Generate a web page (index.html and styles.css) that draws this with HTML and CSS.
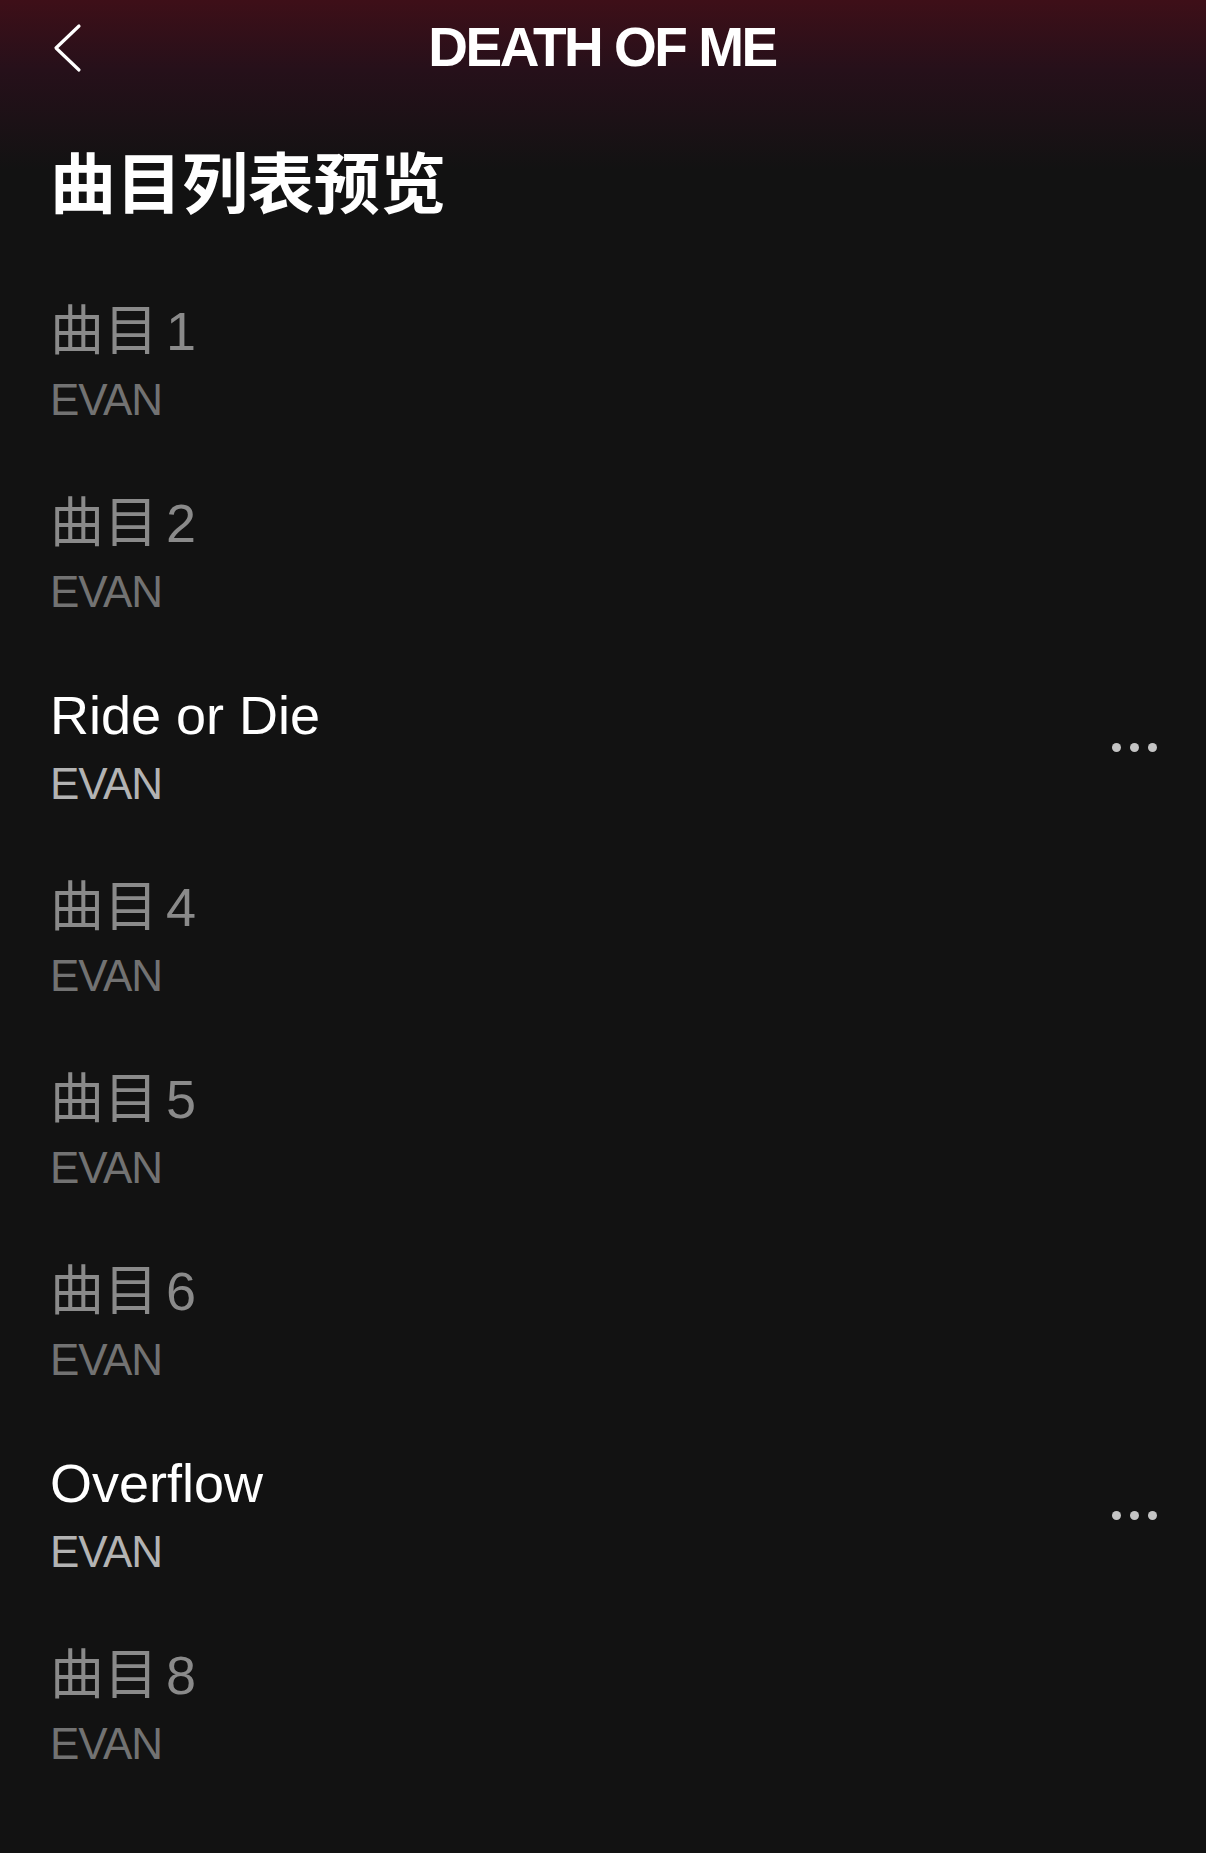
FILE: index.html
```html
<!DOCTYPE html>
<html lang="zh">
<head>
<meta charset="utf-8">
<title>DEATH OF ME</title>
<link rel="stylesheet" href="styles.css">
</head>
<body>
<div class="page">
  <header class="nav">
    <button class="back" aria-label="返回">
      <svg width="32" height="50" viewBox="0 0 32 50"><polyline points="27,3 4,25 27,47" fill="none" stroke="#ffffff" stroke-width="3.2" stroke-linecap="round" stroke-linejoin="round"/></svg>
    </button>
    <div class="nav-title">DEATH OF ME</div>
  </header>
  <h1 class="heading">曲目列表预览</h1>
  <ul class="tracks">
    <li class="track dim"><div class="info"><div class="name">曲目 1</div><div class="artist">EVAN</div></div></li>
    <li class="track dim"><div class="info"><div class="name">曲目 2</div><div class="artist">EVAN</div></div></li>
    <li class="track"><div class="info"><div class="name">Ride or Die</div><div class="artist">EVAN</div></div><div class="more"><span></span><span></span><span></span></div></li>
    <li class="track dim"><div class="info"><div class="name">曲目 4</div><div class="artist">EVAN</div></div></li>
    <li class="track dim"><div class="info"><div class="name">曲目 5</div><div class="artist">EVAN</div></div></li>
    <li class="track dim"><div class="info"><div class="name">曲目 6</div><div class="artist">EVAN</div></div></li>
    <li class="track"><div class="info"><div class="name">Overflow</div><div class="artist">EVAN</div></div><div class="more"><span></span><span></span><span></span></div></li>
    <li class="track dim"><div class="info"><div class="name">曲目 8</div><div class="artist">EVAN</div></div></li>
  </ul>
</div>
</body>
</html>
```
FILE: styles.css
```css
html, body {
  margin: 0;
  padding: 0;
  background: #121212;
}
body {
  font-family: "Liberation Sans", "Noto Sans CJK SC", sans-serif;
  color: #ffffff;
}
.page {
  width: 1206px;
  min-height: 1853px;
  background: linear-gradient(to bottom, #3e0f18 0px, #26101a 70px, #121212 170px, #121212 100%);
}
.nav {
  height: 94px;
  display: flex;
  align-items: center;
  justify-content: center;
  position: relative;
}
.back {
  position: absolute;
  left: 52px;
  top: 23px;
  background: none;
  border: 0;
  padding: 0;
  width: 32px;
  height: 50px;
  display: flex;
}
.nav-title {
  font-size: 55px;
  font-weight: 700;
  letter-spacing: -2.5px;
  line-height: 1;
  margin-left: -2px;
}
.heading {
  margin: 45px 0 0 0;
  padding-left: 50px;
  font-family: "Noto Sans CJK SC", sans-serif;
  font-size: 66px;
  font-weight: 700;
  line-height: 80px;
  height: 80px;
}
.tracks {
  list-style: none;
  margin: 50px 0 0 0;
  padding: 0;
}
.track {
  display: flex;
  align-items: center;
  justify-content: space-between;
  padding: 27px 49px 27px 50px;
  height: 138px;
}
.info {
  display: flex;
  flex-direction: column;
}
.name {
  font-family: "Liberation Sans", "Noto Sans CJK SC", sans-serif;
  font-size: 54px;
  line-height: 70px;
  color: #ffffff;
  letter-spacing: 0;
}
.artist {
  font-size: 44px;
  line-height: 68px;
  color: #b3b3b3;
  letter-spacing: -1.2px;
}
.dim .name {
  color: #8a8a8a;
  word-spacing: -7px;
}
.dim .artist {
  color: #727272;
}
.more {
  display: flex;
  gap: 9px;
  align-items: center;
  margin-top: -3px;
}
.more span {
  width: 9px;
  height: 9px;
  border-radius: 50%;
  background: #c4c4c4;
}
```
